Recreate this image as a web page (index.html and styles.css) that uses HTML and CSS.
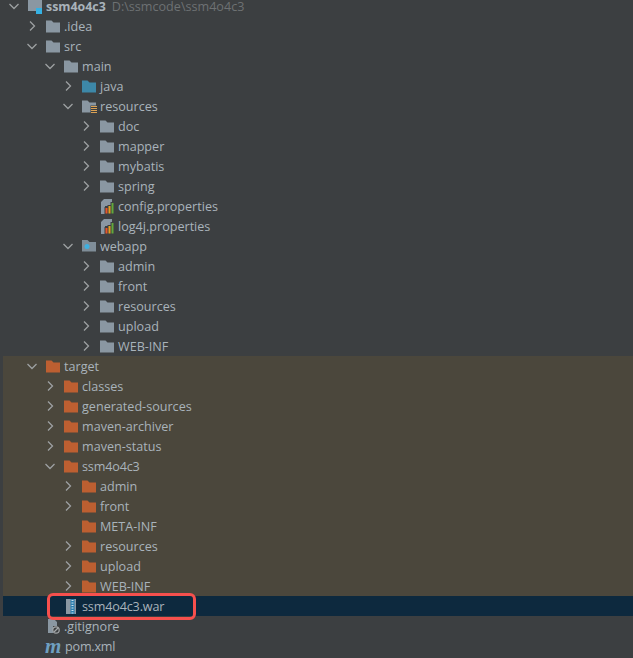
FILE: index.html
```html
<!DOCTYPE html>
<html>
<head>
<meta charset="utf-8">
<title>Project</title>
<link rel="stylesheet" href="styles.css">
</head>
<body>
<svg class="defs" width="0" height="0">
  <symbol id="open" viewBox="0 0 16 16"><path d="M3.500 6l4.500 4.500L12.500 6" fill="none" stroke="#9da0a2" stroke-width="1.300"/></symbol>
  <symbol id="closed" viewBox="0 0 16 16"><path d="M6 3.500l4.500 4.500L6 12.500" fill="none" stroke="#9da0a2" stroke-width="1.300"/></symbol>
  <symbol id="folder" viewBox="0 0 16 16"><path d="M1 2.500h5.500l2 2H15v10H1z" fill="#8a97a2"/></symbol>
  <symbol id="orange" viewBox="0 0 16 16"><path d="M1 2.500h5.500l2 2H15v10H1z" fill="#bd5f31"/></symbol>
  <symbol id="java" viewBox="0 0 16 16"><path d="M1 2.500h5.500l2 2H15v10H1z" fill="#3d88a8"/></symbol>
  <symbol id="res" viewBox="0 0 16 16"><path d="M1 2.500h5.500l2 2H15v3H9.500v7H1z" fill="#8a97a2"/><path d="M10 8.500h6M10 10.500h6M10 12.500h6M10 14.500h6" stroke="#dca254" stroke-width="1"/></symbol>
  <symbol id="web" viewBox="0 0 16 16"><path d="M1 2h5.500l2 2H15v9.500H1z" fill="#7f8d98"/><circle cx="6" cy="8.500" r="2.500" fill="#3fb0e0"/></symbol>
  <symbol id="module" viewBox="0 0 16 16"><path d="M1 0h5.500l2 2H15v8H9v3H1z" fill="#8a97a2"/><rect x="9" y="10" width="6" height="6" fill="#35b1e3"/></symbol>
  <symbol id="props" viewBox="0 0 16 16"><path d="M5 1h8v7h-7v8H2V4z" fill="#8a97a2"/><path d="M5.500 16V9h3V7h3V4H13v12z" fill="#3c3f41"/><rect x="6.500" y="10" width="2" height="5.500" fill="#e8562a"/><rect x="9.500" y="8" width="2" height="7.500" fill="#e6a020"/><rect x="12.500" y="5" width="2" height="10.500" fill="#62a83c"/></symbol>
  <symbol id="war" viewBox="0 0 16 16"><rect x="3" y="1" width="10" height="15" fill="#8a97a2"/><rect x="7.500" y="1" width="4" height="15" fill="#2b7fb0"/><path d="M8.500 2.500h2M8.500 5h2M8.500 7.500h2M8.500 10h2M8.500 12.500h2M8.500 15h2" stroke="#cfe3ee" stroke-width="1"/></symbol>
  <symbol id="ignore" viewBox="0 0 16 16"><path d="M3 1h6l3 3v4H8v7H3z" fill="#8a97a2"/><circle cx="11" cy="12" r="3.200" fill="#3c3f41" stroke="#a4a7a9" stroke-width="1.200"/><path d="M9 14l4-4" stroke="#a4a7a9" stroke-width="1.200"/></symbol>
</svg>

<div class="tree">
  <div class="row d0"><svg class="arrow"><use href="#open"/></svg><svg class="ico"><use href="#module"/></svg><span class="label strong">ssm4o4c3</span><span class="path">D:\ssmcode\ssm4o4c3</span></div>
  <div class="row d1"><svg class="arrow"><use href="#closed"/></svg><svg class="ico"><use href="#folder"/></svg><span class="label">.idea</span></div>
  <div class="row d1"><svg class="arrow"><use href="#open"/></svg><svg class="ico"><use href="#folder"/></svg><span class="label">src</span></div>
  <div class="row d2"><svg class="arrow"><use href="#open"/></svg><svg class="ico"><use href="#folder"/></svg><span class="label">main</span></div>
  <div class="row d3"><svg class="arrow"><use href="#closed"/></svg><svg class="ico"><use href="#java"/></svg><span class="label">java</span></div>
  <div class="row d3"><svg class="arrow"><use href="#open"/></svg><svg class="ico"><use href="#res"/></svg><span class="label">resources</span></div>
  <div class="row d4"><svg class="arrow"><use href="#closed"/></svg><svg class="ico"><use href="#folder"/></svg><span class="label">doc</span></div>
  <div class="row d4"><svg class="arrow"><use href="#closed"/></svg><svg class="ico"><use href="#folder"/></svg><span class="label">mapper</span></div>
  <div class="row d4"><svg class="arrow"><use href="#closed"/></svg><svg class="ico"><use href="#folder"/></svg><span class="label">mybatis</span></div>
  <div class="row d4"><svg class="arrow"><use href="#closed"/></svg><svg class="ico"><use href="#folder"/></svg><span class="label">spring</span></div>
  <div class="row d4"><span class="arrow"></span><svg class="ico"><use href="#props"/></svg><span class="label">config.properties</span></div>
  <div class="row d4"><span class="arrow"></span><svg class="ico"><use href="#props"/></svg><span class="label">log4j.properties</span></div>
  <div class="row d3"><svg class="arrow"><use href="#open"/></svg><svg class="ico"><use href="#web"/></svg><span class="label">webapp</span></div>
  <div class="row d4"><svg class="arrow"><use href="#closed"/></svg><svg class="ico"><use href="#folder"/></svg><span class="label">admin</span></div>
  <div class="row d4"><svg class="arrow"><use href="#closed"/></svg><svg class="ico"><use href="#folder"/></svg><span class="label">front</span></div>
  <div class="row d4"><svg class="arrow"><use href="#closed"/></svg><svg class="ico"><use href="#folder"/></svg><span class="label">resources</span></div>
  <div class="row d4"><svg class="arrow"><use href="#closed"/></svg><svg class="ico"><use href="#folder"/></svg><span class="label">upload</span></div>
  <div class="row d4"><svg class="arrow"><use href="#closed"/></svg><svg class="ico"><use href="#folder"/></svg><span class="label">WEB-INF</span></div>
  <div class="excluded">
    <div class="row d1"><svg class="arrow"><use href="#open"/></svg><svg class="ico"><use href="#orange"/></svg><span class="label">target</span></div>
    <div class="row d2"><svg class="arrow"><use href="#closed"/></svg><svg class="ico"><use href="#orange"/></svg><span class="label">classes</span></div>
    <div class="row d2"><svg class="arrow"><use href="#closed"/></svg><svg class="ico"><use href="#orange"/></svg><span class="label">generated-sources</span></div>
    <div class="row d2"><svg class="arrow"><use href="#closed"/></svg><svg class="ico"><use href="#orange"/></svg><span class="label">maven-archiver</span></div>
    <div class="row d2"><svg class="arrow"><use href="#closed"/></svg><svg class="ico"><use href="#orange"/></svg><span class="label">maven-status</span></div>
    <div class="row d2"><svg class="arrow"><use href="#open"/></svg><svg class="ico"><use href="#orange"/></svg><span class="label tight">ssm4o4c3</span></div>
    <div class="row d3"><svg class="arrow"><use href="#closed"/></svg><svg class="ico"><use href="#orange"/></svg><span class="label">admin</span></div>
    <div class="row d3"><svg class="arrow"><use href="#closed"/></svg><svg class="ico"><use href="#orange"/></svg><span class="label">front</span></div>
    <div class="row d3"><span class="arrow"></span><svg class="ico"><use href="#orange"/></svg><span class="label">META-INF</span></div>
    <div class="row d3"><svg class="arrow"><use href="#closed"/></svg><svg class="ico"><use href="#orange"/></svg><span class="label">resources</span></div>
    <div class="row d3"><svg class="arrow"><use href="#closed"/></svg><svg class="ico"><use href="#orange"/></svg><span class="label">upload</span></div>
    <div class="row d3"><svg class="arrow"><use href="#closed"/></svg><svg class="ico"><use href="#orange"/></svg><span class="label">WEB-INF</span></div>
  </div>
  <div class="row d2 selected"><span class="arrow"></span><svg class="ico"><use href="#war"/></svg><span class="label tight">ssm4o4c3.war</span><span class="callout"></span></div>
  <div class="row d1"><span class="arrow"></span><svg class="ico"><use href="#ignore"/></svg><span class="label">.gitignore</span></div>
  <div class="row d1"><span class="arrow"></span><span class="maven">m</span><span class="label pom">pom.xml</span></div>
</div>
</body>
</html>
```
FILE: styles.css
```css
html, body {
  margin: 0;
  height: 100%;
  overflow: hidden;
  background: #3c3f41;
}
.defs {
  position: absolute;
}
.tree {
  margin-top: -4px;
  margin-left: 3px;
  font-family: "Open Sans", "Noto Sans", sans-serif;
  font-size: 12.6px;
  color: #a9b3bb;
}
.row {
  position: relative;
  display: flex;
  align-items: center;
  height: 20px;
  white-space: nowrap;
}
.d0 { padding-left: 3px; }
.d1 { padding-left: 21px; }
.d2 { padding-left: 39px; }
.d3 { padding-left: 57px; }
.d4 { padding-left: 75px; }
.arrow {
  flex: none;
  width: 16px;
  height: 16px;
  margin-right: 5px;
}
.ico {
  flex: none;
  width: 16px;
  height: 16px;
}
.label {
  margin-left: 3px;
}
.tight {
  letter-spacing: -0.15px;
}
.pom {
  margin-left: 4px;
  letter-spacing: -0.2px;
}
.strong {
  font-weight: 700;
  font-size: 12.4px;
}
.path {
  margin-left: 6px;
  color: #6d7173;
}
.excluded {
  background: #4b473c;
}
.selected {
  background: #0d293e;
}
.callout {
  position: absolute;
  z-index: 1;
  left: 44px;
  top: -3px;
  width: 143px;
  height: 21px;
  border: 3px solid #f6504d;
  border-radius: 6px;
}
.maven {
  flex: none;
  width: 16px;
  font-family: "Liberation Serif", serif;
  font-style: italic;
  font-weight: 700;
  font-size: 21px;
  line-height: 16px;
  color: #6f9fc0;
  text-align: center;
}
```
